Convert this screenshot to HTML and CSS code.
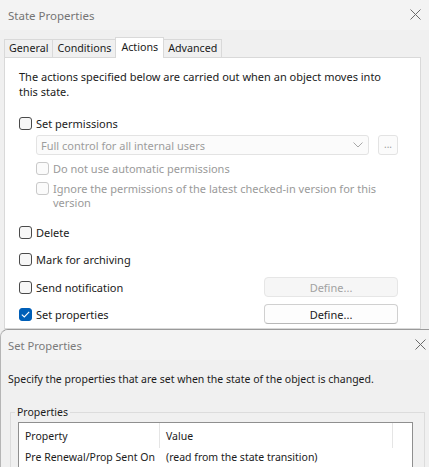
FILE: index.html
```html
<!DOCTYPE html>
<html>
<head>
<meta charset="utf-8">
<link rel="stylesheet" href="styles.css">
</head>
<body>
<div class="dlg dlg-state">
  <div class="titlebar">
    <span class="title">State Properties</span>
    <svg class="close" width="11" height="11" viewBox="0 0 11 11"><path d="M0.5 0.5 L10.5 10.5 M10.5 0.5 L0.5 10.5" stroke="#6b6b6b" stroke-width="1" fill="none"/></svg>
  </div>
  <div class="tabs">
    <div class="tab">General</div>
    <div class="tab">Conditions</div>
    <div class="tab sel">Actions</div>
    <div class="tab">Advanced</div>
  </div>
  <div class="panel">
    <p class="desc">The actions specified below are carried out when an object moves into this state.</p>
    <div class="row r-perm"><span class="cb"></span><span>Set permissions</span></div>
    <div class="row r-combo">
      <div class="combo"><span>Full control for all internal users</span>
        <svg width="10" height="6" viewBox="0 0 10 6"><path d="M0.5 0.5 L5 5 L9.5 0.5" stroke="#a8a8a8" fill="none"/></svg>
      </div>
      <div class="dots">...</div>
    </div>
    <div class="row sub r-auto dis"><span class="cb"></span><span>Do not use automatic permissions</span></div>
    <div class="row sub r-ignore dis"><span class="cb"></span><span>Ignore the permissions of the latest checked-in version for this version</span></div>
    <div class="row r-delete"><span class="cb"></span><span>Delete</span></div>
    <div class="row r-archive"><span class="cb"></span><span>Mark for archiving</span></div>
    <div class="row r-notify"><span class="lbl"><span class="cb"></span><span>Send notification</span></span><button class="btn disabled">Define...</button></div>
    <div class="row r-props"><span class="lbl"><span class="cb checked"><svg width="9" height="7" viewBox="0 0 9 7"><path d="M0.8 3.6 L3.3 6 L8.2 0.8" stroke="#fff" stroke-width="1.1" fill="none"/></svg></span><span>Set properties</span></span><button class="btn">Define...</button></div>
  </div>
</div>
<div class="dlg dlg-set">
  <div class="titlebar">
    <span class="title">Set Properties</span>
    <svg class="close" width="11" height="11" viewBox="0 0 11 11"><path d="M0.5 0.5 L10.5 10.5 M10.5 0.5 L0.5 10.5" stroke="#6b6b6b" stroke-width="1" fill="none"/></svg>
  </div>
  <p class="spec">Specify the properties that are set when the state of the object is changed.</p>
  <fieldset class="group">
    <legend>Properties</legend>
    <div class="list">
      <div class="lrow head"><span class="c1">Property</span><span class="c2">Value</span><span class="c3"></span></div>
      <div class="lrow"><span class="c1">Pre Renewal/Prop Sent On</span><span class="c2">(read from the state transition)</span></div>
    </div>
  </fieldset>
</div>
</body>
</html>
```
FILE: styles.css
```css
* { box-sizing: border-box; }
html, body { margin: 0; padding: 0; }
body {
  width: 429px;
  height: 467px;
  overflow: hidden;
  background: #f0f0f0;
  font-family: "Noto Sans", "Open Sans", sans-serif;
  font-size: 11px;
  color: #1b1b1b;
}
p { margin: 0; }

.dlg-state {
  height: 329px;
  overflow: hidden;
  background: #f0f0f0;
  display: flex;
  flex-direction: column;
}
.titlebar {
  height: 30px;
  flex: none;
  display: flex;
  align-items: center;
  justify-content: space-between;
  padding: 0 8px;
  background: #f3f3f3;
}
.title {
  font-size: 11.5px;
  color: #747474;
}
.dlg-state .close { margin-top: -1px; }

.tabs {
  display: flex;
  align-items: flex-end;
  height: 20px;
  margin-top: 7px;
  padding-left: 4px;
  position: relative;
  z-index: 1;
}
.tab {
  height: 18px;
  line-height: 17px;
  padding: 0 4px;
  border: 1px solid #d9d9d9;
  border-bottom: none;
  border-right: none;
  background: #f0f0f0;
  font-size: 10.7px;
  white-space: nowrap;
}
.tab:last-child { border-right: 1px solid #d9d9d9; }
.tab.sel {
  height: 21px;
  line-height: 18px;
  margin-bottom: -1px;
  padding: 0 5px;
  background: #fff;
  border-right: 1px solid #d9d9d9;
}
.tab.sel + .tab { border-left: none; }

.panel {
  flex: 1;
  margin-left: 4px;
  width: 417px;
  background: #fff;
  border: 1px solid #d9d9d9;
  padding: 11px 22px 0 14px;
  display: flex;
  flex-direction: column;
}
.desc { line-height: 15px; }

.row {
  display: flex;
  align-items: center;
  gap: 4px;
  height: 16px;
}
.row.sub { margin-left: 17px; }
.dis { color: #9a9a9a; }
.cb {
  flex: none;
  width: 13px;
  height: 13px;
  border: 1px solid #4a4a4a;
  border-radius: 3px;
  background: #f7f7f7;
  display: flex;
  align-items: center;
  justify-content: center;
}
.dis .cb { border-color: #c9c9c9; background: #fbfbfb; }
.cb.checked { background: #005fb8; border-color: #005fb8; }

.r-perm { margin-top: 16px; }
.r-combo { margin-top: 4px; height: 20px; margin-left: 17px; gap: 9px; }
.combo {
  width: 334px;
  height: 20px;
  border: 1px solid #e3e3e3;
  border-radius: 3px;
  background: #fbfbfb;
  color: #9d9d9d;
  display: flex;
  align-items: center;
  justify-content: space-between;
  padding: 0 5px 0 4px;
}
.dots {
  width: 20px;
  height: 20px;
  border: 1px solid #e3e3e3;
  border-radius: 3px;
  background: #fbfbfb;
  color: #9d9d9d;
  font-size: 10px;
  text-align: center;
  line-height: 16px;
}
.r-auto { margin-top: 5px; }
.r-ignore {
  margin-top: 6px;
  height: auto;
  align-items: flex-start;
  line-height: 14px;
}
.r-delete { margin-top: 14px; }
.r-archive { margin-top: 11px; }
.r-notify, .r-props {
  height: 20px;
  justify-content: space-between;
}
.r-notify { margin-top: 10px; }
.r-props { margin-top: 7px; }
.lbl { display: flex; align-items: center; gap: 4px; }
.btn {
  width: 134px;
  height: 20px;
  padding: 0;
  font: inherit;
  color: #1b1b1b;
  background: #fdfdfd;
  border: 1px solid #d0d0d0;
  border-bottom-color: #b8b8b8;
  border-radius: 4px;
}
.btn.disabled {
  color: #a2a2a2;
  background: #f6f6f6;
  border-color: #e6e6e6;
}

.dlg-set {
  height: 138px;
  background: #f0f0f0;
  border-top: 1px solid #9a9a9a;
  border-left: 1px solid #b5b5b5;
  border-top-left-radius: 8px;
  overflow: hidden;
  font-size: 10.5px;
}
.dlg-set .titlebar { height: 30px; padding: 0 3px 0 7px; }
.dlg-set .title { font-size: 11.2px; color: #7a7a7a; }
.dlg-set .close { margin-top: -1px; }
.spec {
  padding: 12px 0 0 7px;
  line-height: 15px;
}
.group {
  margin: 18px 4px 0 9px;
  padding: 2px 10px 0 7px;
  border: 1px solid #dcdcdc;
  border-bottom: none;
  min-width: 0;
}
.group legend {
  padding: 0 2px;
  margin-left: -3px;
  line-height: 15px;
}
.list {
  width: 395px;
  height: 60px;
  background: #fff;
  border: 1px solid #8f8f8f;
}
.lrow {
  display: flex;
  height: 18px;
  align-items: center;
  white-space: nowrap;
}
.lrow.head { height: 25px; }
.c1 {
  width: 141px;
  padding-left: 6px;
  flex: none;
  overflow: hidden;
}
.c2 {
  padding-left: 6px;
  flex: none;
}
.head .c1 { border-right: 1px solid #e5e5e5; height: 100%; display: flex; align-items: center; }
.head .c2 { width: 233px; border-right: 1px solid #e5e5e5; height: 100%; display: flex; align-items: center; }
```
